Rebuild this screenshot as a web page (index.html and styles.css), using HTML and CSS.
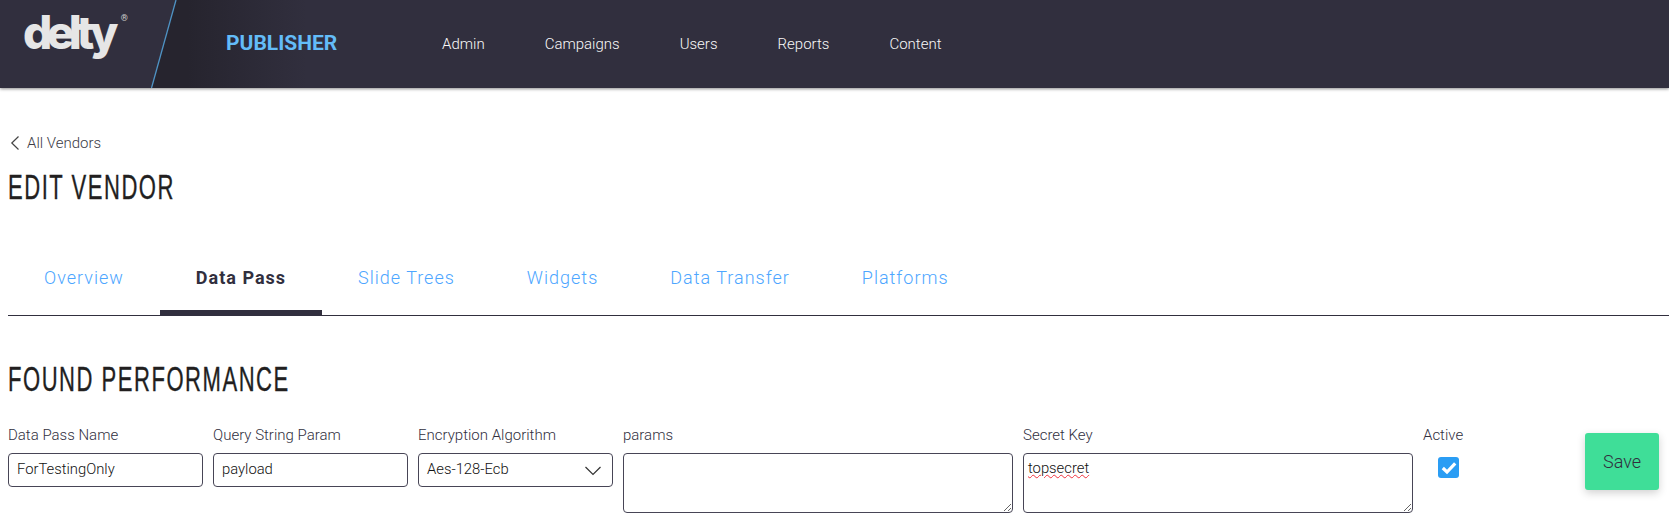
FILE: index.html
```html
<!DOCTYPE html>
<html lang="en">
<head>
<meta charset="utf-8">
<title>Edit Vendor</title>
<link rel="stylesheet" href="styles.css">
</head>
<body>
<header class="topbar">
  <div class="brand"><span class="wordmark">delty</span><span class="reg">®</span></div>
  <svg class="slash" width="30" height="88" viewBox="0 0 30 88" aria-hidden="true"><path d="M26 0 L1.5 88" fill="none" stroke="#4f93c4" stroke-width="1.3"/></svg>
  <div class="product">PUBLISHER</div>
  <nav class="mainnav">
    <a>Admin</a><a>Campaigns</a><a>Users</a><a>Reports</a><a>Content</a>
  </nav>
</header>
<main class="page">
  <a class="back"><svg width="12" height="16" viewBox="0 0 12 16" aria-hidden="true"><path d="M10.5 1.5 L3.8 8 L10.5 14.5" fill="none" stroke="#444" stroke-width="1.2"/></svg>All Vendors</a>
  <h1 class="title">EDIT VENDOR</h1>
  <div class="tabs">
    <a class="tab">Overview</a>
    <a class="tab is-active">Data Pass</a>
    <a class="tab">Slide Trees</a>
    <a class="tab">Widgets</a>
    <a class="tab">Data Transfer</a>
    <a class="tab">Platforms</a>
  </div>
  <h2 class="title section">FOUND PERFORMANCE</h2>
  <form class="row">
    <label class="field small"><span class="lbl">Data Pass Name</span><input class="ctl" value="ForTestingOnly"></label>
    <label class="field small"><span class="lbl">Query String Param</span><input class="ctl" value="payload"></label>
    <label class="field small"><span class="lbl">Encryption Algorithm</span>
      <span class="selectbox"><span class="ctl selectval">Aes-128-Ecb</span>
        <svg class="chev" width="18" height="10" viewBox="0 0 18 10" aria-hidden="true"><path d="M1.5 1 L9 8.5 L16.5 1" fill="none" stroke="#333" stroke-width="1.2"/></svg>
      </span></label>
    <label class="field wide"><span class="lbl">params</span><textarea class="ctl area" spellcheck="false"></textarea></label>
    <label class="field wide"><span class="lbl">Secret Key</span><textarea class="ctl area misspelt" spellcheck="false">topsecret</textarea></label>
    <div class="field active"><span class="lbl">Active</span>
      <span class="check"><svg width="16" height="14" viewBox="0 0 16 14" aria-hidden="true"><path d="M1.8 7 L6 11 L14.2 2.4" fill="none" stroke="#fff" stroke-width="3.2"/></svg></span>
    </div>
    <button class="save" type="button">Save</button>
  </form>
</main>
</body>
</html>
```
FILE: styles.css
```css
* { box-sizing: border-box; }
html, body { margin: 0; padding: 0; background: #fff; overflow: hidden; }
body { font-family: Roboto, "Liberation Sans", sans-serif; color: #312f3e; height: 527px; }

.topbar {
  height: 88px;
  display: flex;
  align-items: center;
  background: #312f3e;
  box-shadow: 0 1px 3px rgba(0,0,0,.45);
  position: relative;
}
.brand { width: 150px; height: 88px; padding: 0 0 0 23px; display: flex; align-items: flex-start; flex: none; }
.wordmark {
  font-family: Inter, Roboto, sans-serif;
  font-weight: 800;
  font-size: 46px;
  line-height: 1;
  letter-spacing: -5.6px;
  color: #e6e6e6;
  margin-top: 9px;
}
.reg { font-size: 9px; color: #cfcfcf; margin: 13px 0 0 8px; }
.slash { flex: none; width: 30px; height: 88px; margin-right: -30px; position: relative; z-index: 1; }
.product {
  flex: none;
  width: 270px;
  height: 88px;
  padding-left: 76px;
  line-height: 86px;
  font-size: 21px;
  font-weight: 700;
  color: #63bcf8;
  background: linear-gradient(90deg, #26242e 0, #26242e 14%, #312f3e 58%);
  clip-path: polygon(26px 0, 100% 0, 100% 100%, 1.5px 100%);
}
.mainnav { display: flex; gap: 60px; padding-left: 22px; }
.mainnav a { color: #f8f8f8; font-size: 15px; font-weight: 300; line-height: 82px; }

.page { padding: 45px 0 0 8px; }
.back { display: flex; align-items: center; font-size: 15px; font-weight: 300; color: #3c3c46; height: 20px; }
.back svg { margin-right: 7px; }
.title {
  margin: 14px 0 0;
  font-family: "Liberation Sans", sans-serif;
  font-weight: 400;
  font-size: 35px;
  line-height: 40px;
  letter-spacing: 2.4px;
  color: #221f1f;
  -webkit-text-stroke: .35px #221f1f;
  transform: scaleX(.63);
  transform-origin: left center;
}
.tabs { display: flex; border-bottom: 1px solid #312f3e; margin-top: 41px; height: 68px; }
.tab {
  padding: 0 36px;
  font-size: 18px;
  font-weight: 300;
  letter-spacing: 1px;
  line-height: 60px;
  color: #4da6ff;
}
.tab.is-active { font-weight: 700; color: #312f3e; border-bottom: 6px solid #312f3e; height: 68px; }
.section { margin-top: 43px; }

.row { display: flex; align-items: flex-start; gap: 10px; margin-top: 27px; }
.field { display: flex; flex-direction: column; flex: none; }
.small { width: 195px; }
.wide { width: 390px; }
.active { width: 50px; }
.lbl { font-size: 15px; font-weight: 300; color: #312f3e; line-height: 18px; margin-bottom: 9px; }
.ctl {
  display: block;
  width: 100%;
  height: 34px;
  border: 1px solid #474556;
  border-radius: 4px;
  background: #fff;
  padding: 0 8px 2px;
  font-family: Roboto, sans-serif;
  font-size: 14.8px;
  font-weight: 300;
  color: #111;
  outline: none;
}
.selectbox { display: block; position: relative; }
.selectval { line-height: 30px; }
.chev { position: absolute; right: 11px; top: 13px; }
.area { height: 60px; padding: 5px 4px; line-height: 18px; resize: both; }
.misspelt { text-decoration: underline wavy #f0323c; text-decoration-thickness: 1px; }
.check {
  display: flex;
  align-items: center;
  justify-content: center;
  width: 21px;
  height: 21px;
  margin: 4px 0 0 15px;
  background: #2a9df4;
  border-radius: 3px;
}
.save {
  flex: none;
  width: 74px;
  height: 57px;
  margin: 7px 0 0 102px;
  border: 0;
  border-radius: 3px;
  background: #3fde98;
  color: #312f3e;
  font-family: Roboto, sans-serif;
  font-size: 18px;
  font-weight: 300;
  box-shadow: 0 3px 8px rgba(0,0,0,.18);
}
```
